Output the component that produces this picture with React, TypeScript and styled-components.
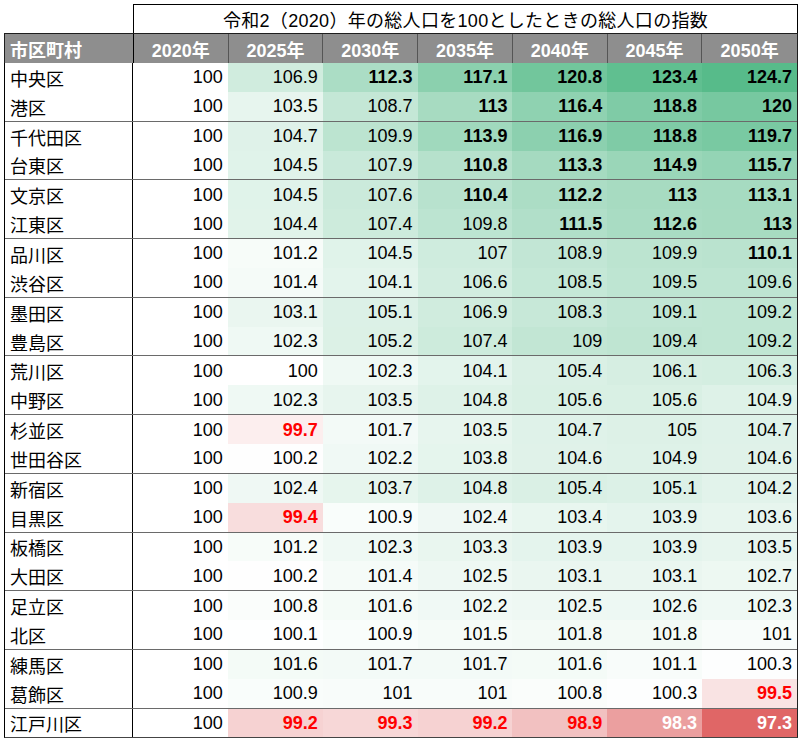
import React from "react";
import styled, { createGlobalStyle } from "styled-components";

const Global = createGlobalStyle`
  html, body { margin: 0; padding: 0; background: #ffffff; }
  body { font-family: "Liberation Sans", "Noto Sans CJK JP", Arial, sans-serif; color: #000; }
`;

const Page = styled.div`
  padding: 4px 0 0 4px;
`;

const Sheet = styled.div`
  width: 794px;
  font-size: 18px;
`;

const COLS = "129px repeat(7, 1fr)";

const TitleRow = styled.div`
  display: grid;
  grid-template-columns: ${COLS};
  height: 29px;
`;

const Corner = styled.div``;

const Title = styled.div`
  grid-column: 2 / span 7;
  border: 1px solid #000;
  border-bottom: none;
  display: flex;
  align-items: center;
  justify-content: center;
  font-size: 18px;
  white-space: nowrap;
  letter-spacing: 0.3px;
`;

const HeaderRow = styled.div`
  display: grid;
  grid-template-columns: ${COLS};
  height: 30px;
  background: #8e8e8e;
  border: 1px solid #1e1e1e;
  border-bottom: none;
  box-sizing: border-box;
`;

const HeadCell = styled.div<{ $left?: boolean }>`
  display: flex;
  align-items: center;
  justify-content: ${(p) => (p.$left ? "flex-start" : "center")};
  padding-left: ${(p) => (p.$left ? "5px" : "0")};
  color: #fff;
  font-weight: bold;
  border-right: 1px solid ${(p) => (p.$left ? "#000" : "#555")};
  &:last-child { border-right: none; }
`;

const Body = styled.div`
  border-left: 1px solid #000;
  border-right: 1px solid #222;
  border-bottom: 1px solid #444;
`;

const Group = styled.div`
  border-bottom: 1px solid #6a6a6a;
  &:last-child { border-bottom: none; }
`;

const Row = styled.div`
  display: grid;
  grid-template-columns: 128px repeat(7, 1fr);
  height: 28.85px;
`;

const NameCell = styled.div`
  display: flex;
  align-items: center;
  padding-left: 5px;
  padding-top: 1px;
  border-right: 1px solid #000;
  white-space: nowrap;
`;

type Tone = "plain" | "bold" | "red" | "white";

const NumCell = styled.div<{ $bg: string; $tone: Tone }>`
  display: flex;
  align-items: center;
  justify-content: flex-end;
  padding-right: 5px;
  padding-top: 1px;
  background: ${(p) => p.$bg};
  font-weight: ${(p) => (p.$tone === "plain" ? "normal" : "bold")};
  color: ${(p) =>
    p.$tone === "red" ? "#ff0000" : p.$tone === "white" ? "#ffffff" : "#000000"};
`;

const MAX = 124.7;
const MIN = 97.3;
const GREEN = [87, 187, 138];
const RED = [224, 102, 102];

function mix(c: number[], t: number) {
  const r = Math.round(255 + (c[0] - 255) * t);
  const g = Math.round(255 + (c[1] - 255) * t);
  const b = Math.round(255 + (c[2] - 255) * t);
  return `rgb(${r},${g},${b})`;
}

function scale(v: number) {
  if (v >= 100) return mix(GREEN, Math.min(1, (v - 100) / (MAX - 100)));
  return mix(RED, Math.min(1, (100 - v) / (100 - MIN)));
}

function tone(v: number, first: boolean): Tone {
  if (first) return "plain";
  if (v < 98.5) return "white";
  if (v < 100) return "red";
  if (v >= 110) return "bold";
  return "plain";
}

const years = ["2020年", "2025年", "2030年", "2035年", "2040年", "2045年", "2050年"];

const data: [string, string[]][] = [
  ["中央区", ["100", "106.9", "112.3", "117.1", "120.8", "123.4", "124.7"]],
  ["港区", ["100", "103.5", "108.7", "113", "116.4", "118.8", "120"]],
  ["千代田区", ["100", "104.7", "109.9", "113.9", "116.9", "118.8", "119.7"]],
  ["台東区", ["100", "104.5", "107.9", "110.8", "113.3", "114.9", "115.7"]],
  ["文京区", ["100", "104.5", "107.6", "110.4", "112.2", "113", "113.1"]],
  ["江東区", ["100", "104.4", "107.4", "109.8", "111.5", "112.6", "113"]],
  ["品川区", ["100", "101.2", "104.5", "107", "108.9", "109.9", "110.1"]],
  ["渋谷区", ["100", "101.4", "104.1", "106.6", "108.5", "109.5", "109.6"]],
  ["墨田区", ["100", "103.1", "105.1", "106.9", "108.3", "109.1", "109.2"]],
  ["豊島区", ["100", "102.3", "105.2", "107.4", "109", "109.4", "109.2"]],
  ["荒川区", ["100", "100", "102.3", "104.1", "105.4", "106.1", "106.3"]],
  ["中野区", ["100", "102.3", "103.5", "104.8", "105.6", "105.6", "104.9"]],
  ["杉並区", ["100", "99.7", "101.7", "103.5", "104.7", "105", "104.7"]],
  ["世田谷区", ["100", "100.2", "102.2", "103.8", "104.6", "104.9", "104.6"]],
  ["新宿区", ["100", "102.4", "103.7", "104.8", "105.4", "105.1", "104.2"]],
  ["目黒区", ["100", "99.4", "100.9", "102.4", "103.4", "103.9", "103.6"]],
  ["板橋区", ["100", "101.2", "102.3", "103.3", "103.9", "103.9", "103.5"]],
  ["大田区", ["100", "100.2", "101.4", "102.5", "103.1", "103.1", "102.7"]],
  ["足立区", ["100", "100.8", "101.6", "102.2", "102.5", "102.6", "102.3"]],
  ["北区", ["100", "100.1", "100.9", "101.5", "101.8", "101.8", "101"]],
  ["練馬区", ["100", "101.6", "101.7", "101.7", "101.6", "101.1", "100.3"]],
  ["葛飾区", ["100", "100.9", "101", "101", "100.8", "100.3", "99.5"]],
  ["江戸川区", ["100", "99.2", "99.3", "99.2", "98.9", "98.3", "97.3"]],
];

const groups: [string, string[]][][] = [];
for (let i = 0; i < data.length; i += 2) groups.push(data.slice(i, i + 2));

export default function App() {
  return (
    <Page>
      <Global />
      <Sheet>
        <TitleRow>
          <Corner />
          <Title>令和2（2020）年の総人口を100としたときの総人口の指数</Title>
        </TitleRow>
        <HeaderRow>
          <HeadCell $left>市区町村</HeadCell>
          {years.map((y) => (
            <HeadCell key={y}>{y}</HeadCell>
          ))}
        </HeaderRow>
        <Body>
          {groups.map((g, gi) => (
            <Group key={gi}>
              {g.map(([name, vals]) => (
                <Row key={name}>
                  <NameCell>{name}</NameCell>
                  {vals.map((s, i) => {
                    const v = parseFloat(s);
                    return (
                      <NumCell key={i} $bg={i === 0 ? "#ffffff" : scale(v)} $tone={tone(v, i === 0)}>
                        {s}
                      </NumCell>
                    );
                  })}
                </Row>
              ))}
            </Group>
          ))}
        </Body>
      </Sheet>
    </Page>
  );
}
